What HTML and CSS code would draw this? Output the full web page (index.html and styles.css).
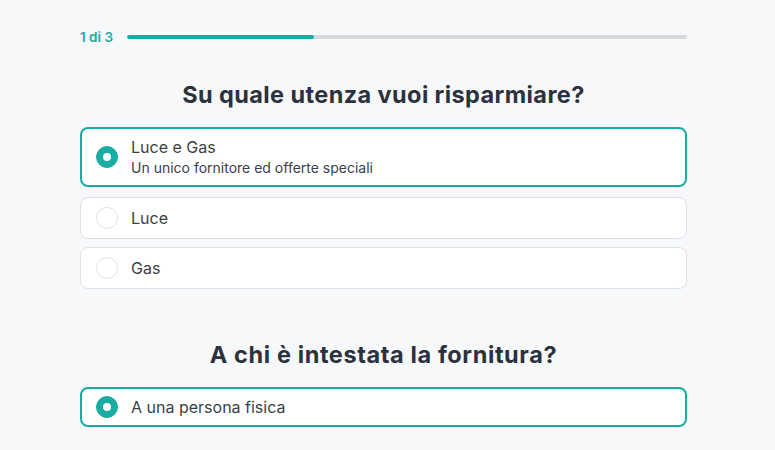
FILE: index.html
```html
<!DOCTYPE html>
<html lang="it">
<head>
<meta charset="utf-8">
<link rel="stylesheet" href="styles.css">
</head>
<body>
<main class="wrap">
  <div class="progress">
    <span class="step">1 di 3</span>
    <div class="track"><div class="fill" style="width:33.3%"></div></div>
  </div>

  <section class="question">
    <h2 class="title">Su quale utenza vuoi risparmiare?</h2>
    <div class="options">
      <label class="option selected tall">
        <span class="radio"></span>
        <span class="text">
          <span class="label">Luce e Gas</span>
          <span class="sub">Un unico fornitore ed offerte speciali</span>
        </span>
      </label>
      <label class="option">
        <span class="radio"></span>
        <span class="text"><span class="label">Luce</span></span>
      </label>
      <label class="option">
        <span class="radio"></span>
        <span class="text"><span class="label">Gas</span></span>
      </label>
    </div>
  </section>

  <section class="question second">
    <h2 class="title">A chi è intestata la fornitura?</h2>
    <div class="options">
      <label class="option selected">
        <span class="radio"></span>
        <span class="text"><span class="label">A una persona fisica</span></span>
      </label>
    </div>
  </section>
</main>
</body>
</html>
```

FILE: styles.css
```css
html, body {
  margin: 0;
  padding: 0;
  background: #f7f8fa;
  font-family: Inter, "Noto Sans", sans-serif;
  color: #2d3440;
}

.wrap {
  width: 607px;
  margin-left: 80px;
  padding-top: 29px;
}

.progress {
  display: flex;
  align-items: center;
  gap: 14px;
  height: 16px;
}

.step {
  font-size: 13.5px;
  font-weight: 600;
  color: #1eaaa2;
  white-space: nowrap;
}

.track {
  flex: 1;
  height: 4px;
  background: #d3d8e1;
  border-radius: 2px;
  overflow: hidden;
}

.fill {
  height: 100%;
  background: #1aaba3;
  border-radius: 2px;
}

.question {
  margin-top: 35px;
}

.question.second {
  margin-top: 51px;
}

.title {
  margin: 0 0 17px;
  text-align: center;
  font-size: 23.5px;
  font-weight: 700;
  color: #2b323e;
  line-height: 30px;
  letter-spacing: 0.4px;
}

.question.second .title {
  letter-spacing: 0.6px;
}

.options {
  display: flex;
  flex-direction: column;
  gap: 8px;
}

.option {
  display: flex;
  align-items: center;
  gap: 13px;
  background: #fff;
  border: 1px solid #dde1e9;
  border-radius: 8px;
  padding: 0 15px;
  height: 42px;
  box-sizing: border-box;
  flex: none;
}

.option.selected {
  border: 2px solid #1aaba3;
  padding: 0 14px;
  height: 40px;
}

.option.tall {
  height: 60px;
  margin-bottom: 2px;
}

.radio {
  width: 22px;
  height: 22px;
  border-radius: 50%;
  border: 1px solid #dfe3ea;
  box-sizing: border-box;
  background: #fff;
  flex: none;
  position: relative;
}

.option.selected .radio {
  background: #1aaba3;
  border-color: #1aaba3;
}

.option.selected .radio::after {
  content: "";
  position: absolute;
  left: 50%;
  top: 50%;
  width: 8px;
  height: 8px;
  margin: -4px 0 0 -4px;
  border-radius: 50%;
  background: #fff;
}

.text {
  display: flex;
  flex-direction: column;
}

.label {
  font-size: 16px;
  color: #3a3f48;
  line-height: 20px;
}

.sub {
  font-size: 14px;
  color: #3b404a;
  line-height: 18px;
  margin-top: 2px;
}
```
